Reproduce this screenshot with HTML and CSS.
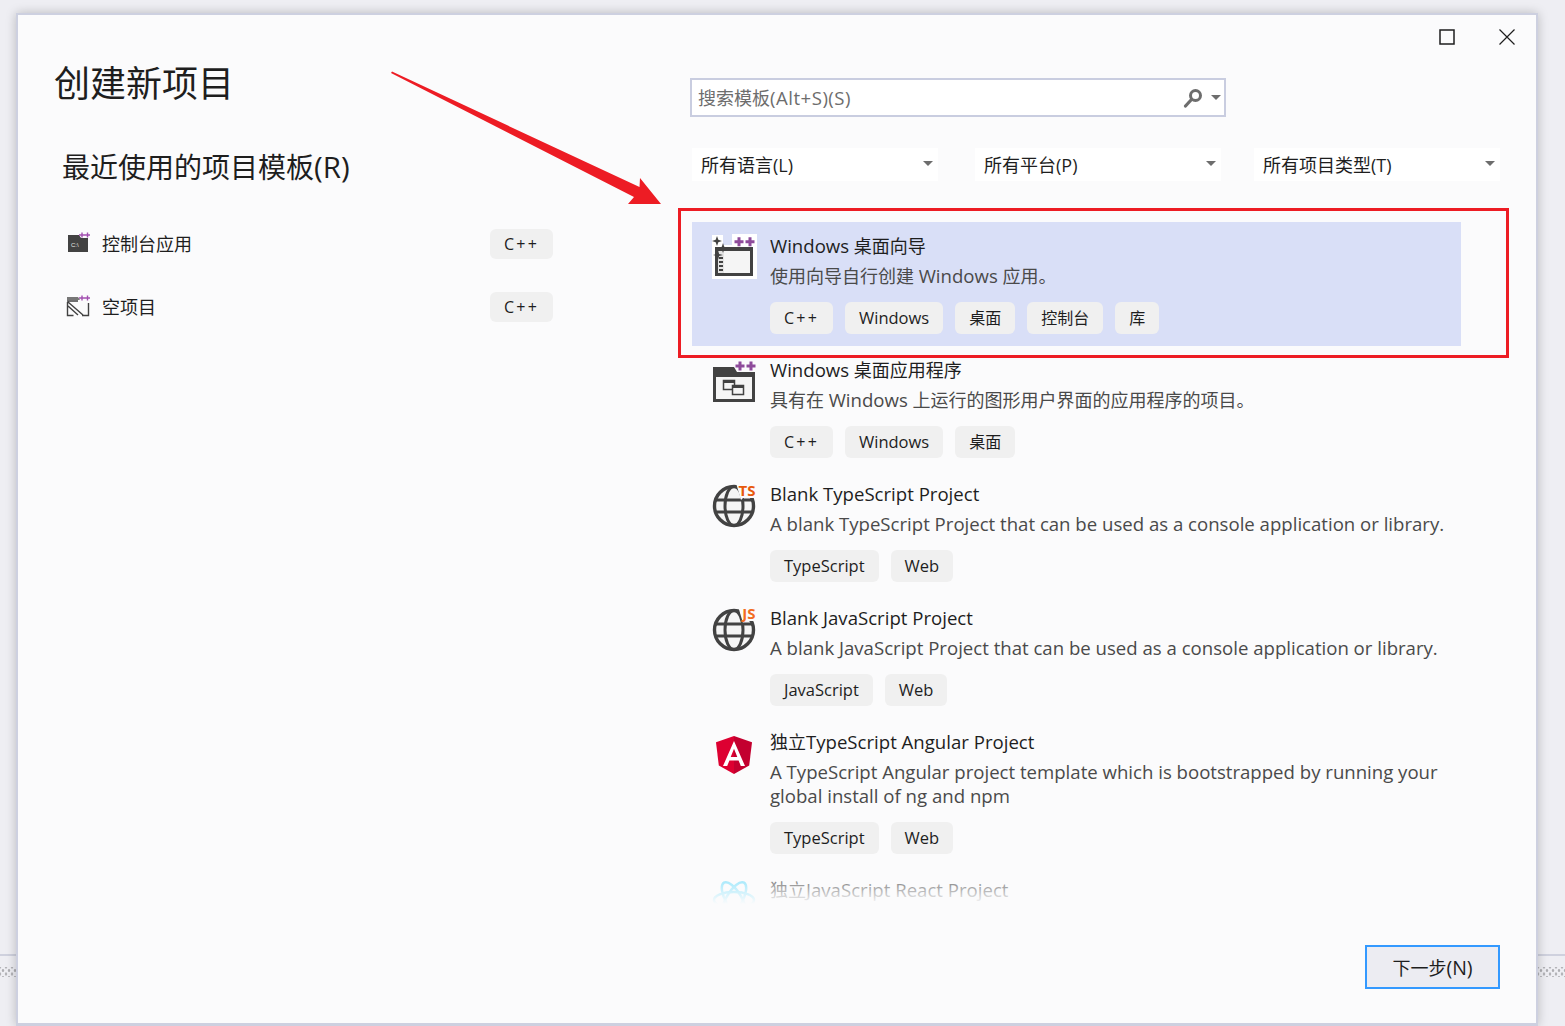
FILE: index.html
```html
<!DOCTYPE html>
<html lang="zh-CN">
<head>
<meta charset="utf-8">
<title>创建新项目</title>
<link rel="stylesheet" href="styles.css">
</head>
<body>
<div class="bg-line"></div>
<div class="bg-dots bg-dots-left"></div>
<div class="bg-dots bg-dots-right"></div>
<div class="dialog">
  <div class="titlebar">
    <span class="win-btn"><svg width="16" height="16" viewBox="0 0 16 16"><rect x="1" y="1" width="14" height="14" fill="none" stroke="#1e1e1e" stroke-width="1.5"/></svg></span>
    <span class="win-btn"><svg width="16" height="16" viewBox="0 0 16 16"><path d="M0.5 0.5L15.5 15.5M15.5 0.5L0.5 15.5" stroke="#1e1e1e" stroke-width="1.2"/></svg></span>
  </div>
  <div class="body">
    <div class="left">
      <h1 class="page-title">创建新项目</h1>
      <h2 class="section-title">最近使用的项目模板<span class="section-key">(R)</span></h2>
      <div class="recent-row">
        <svg class="recent-icon" width="24" height="22" viewBox="0 0 24 22"><path d="M2 3h11l2 3h7v14H2z" fill="#424242"/><text x="5" y="15" font-size="6" font-family="Liberation Sans" fill="#e8e8e8">C:\</text><path d="M13 3h6M16 .5v5M19 3h5M21.500 .5v5" stroke="#a24fb0" stroke-width="1.400" fill="none"/></svg>
        <span class="recent-name">控制台应用</span>
        <span class="tag tag-plus">C++</span>
      </div>
      <div class="recent-row">
        <svg class="recent-icon" width="24" height="22" viewBox="0 0 24 22"><path d="M1 6h11M1.500 7v13.500h6M16 20.500h6.500V8M2 7l15 13M2 11l10 9" stroke="#424242" stroke-width="1.400" fill="none"/><path d="M1 2h11l2 3H1z" fill="#777"/><path d="M13 3h6M16 .5v5M19 3h5M21.500 .5v5" stroke="#a24fb0" stroke-width="1.400" fill="none"/></svg>
        <span class="recent-name">空项目</span>
        <span class="tag tag-plus">C++</span>
      </div>
    </div>
    <div class="right">
      <div class="search">
        <span class="search-text">搜索模板<span class="search-key">(Alt+S)(S)</span></span>
        <svg width="20" height="20" viewBox="0 0 20 20"><circle cx="12.500" cy="7.500" r="5" fill="none" stroke="#6d6d6d" stroke-width="3"/><path d="M8.500 11.500L2.500 18" stroke="#6d6d6d" stroke-width="3.200" stroke-linecap="round"/></svg>
        <span class="caret search-caret"></span>
      </div>
      <div class="filters">
        <div class="filter"><span>所有语言(L)</span><span class="caret"></span></div>
        <div class="filter filter-platform"><span>所有平台(P)</span><span class="caret"></span></div>
        <div class="filter"><span>所有项目类型(T)</span><span class="caret"></span></div>
      </div>
      <div class="list">
        <div class="item item-selected">
          <svg class="item-icon" width="46" height="46" viewBox="0 0 46 46">
            <path d="M0 13h45v34H0zM0 3h11v12H0zM20 2h25v14H20z" fill="#fff"/>
            <rect x="4.500" y="16.500" width="35" height="26" fill="#f5f5f5" stroke="#424242" stroke-width="3"/>
            <path d="M3 15h38v4H3z" fill="#424242"/>
            <path d="M6 19h6v22H6z" fill="#e4e4e4"/>
            <path d="M7 25h4v2H7zM7 29h4v2H7zM7 33h4v2H7zM7 37h4v2H7z" fill="#424242"/>
            <path d="M5 4l1.300 3.700L10 9 6.300 10.300 5 14 3.700 10.300 0 9l3.700-1.300zM11 11l1.200 3.800L16 16l-3.800 1.200L11 21l-1.200-3.800L6 16l3.800-1.200zM6 18l1.100 3.900L11 23l-3.900 1.100L6 28l-1.100-3.900L1 23l3.900-1.100z" fill="#424242"/>
            <path d="M22.500 9.700h9M27 5.200v9M33.500 9.700h9M38 5.200v9" stroke="#8e4b9b" stroke-width="3" fill="none"/>
          </svg>
          <div class="item-main">
            <div class="item-title"><span class="en">Windows</span> 桌面向导</div>
            <div class="item-desc">使用向导自行创建 <span class="en">Windows</span> 应用。</div>
            <div class="tags"><span class="tag tag-plus">C++</span><span class="tag tag-en">Windows</span><span class="tag">桌面</span><span class="tag">控制台</span><span class="tag">库</span></div>
          </div>
        </div>
        <div class="item">
          <svg class="item-icon" width="46" height="46" viewBox="0 0 46 46">
            <path d="M2.500 17.500h39v27h-39z" fill="#f5f5f5" stroke="#424242" stroke-width="3"/>
            <path d="M1 11h21l3 5h18v5H1z" fill="#424242"/>
            <path d="M23.500 10h9M28 5.500v9M34.500 10h9M39 5.500v9" stroke="#8e4b9b" stroke-width="3" fill="none"/>
            <rect x="11.500" y="24.500" width="11" height="9" fill="#f5f5f5" stroke="#424242" stroke-width="1.500"/>
            <path d="M11 26h12" stroke="#424242" stroke-width="2"/>
            <rect x="20.500" y="29.500" width="11" height="9" fill="#f5f5f5" stroke="#424242" stroke-width="1.500"/>
            <path d="M20 31h12" stroke="#424242" stroke-width="2"/>
          </svg>
          <div class="item-main">
            <div class="item-title"><span class="en">Windows</span> 桌面应用程序</div>
            <div class="item-desc">具有在 <span class="en">Windows</span> 上运行的图形用户界面的应用程序的项目。</div>
            <div class="tags"><span class="tag tag-plus">C++</span><span class="tag tag-en">Windows</span><span class="tag">桌面</span></div>
          </div>
        </div>
        <div class="item">
          <svg class="item-icon" width="46" height="46" viewBox="0 0 46 46">
            <circle cx="22" cy="26" r="19.500" fill="#f5f5f5" stroke="#424242" stroke-width="3.400"/>
            <ellipse cx="22" cy="26" rx="9" ry="19.500" fill="none" stroke="#424242" stroke-width="3"/>
            <path d="M4 20h36M4 32h36" stroke="#424242" stroke-width="3"/>
            <path d="M24 3h22v15H31l-2 2z" fill="#fbfbfc"/>
            <text class="badge" x="43.500" y="16" text-anchor="end" fill="#e8590c">TS</text>
          </svg>
          <div class="item-main">
            <div class="item-title en">Blank TypeScript Project</div>
            <div class="item-desc en">A blank TypeScript Project that can be used as a console application or library.</div>
            <div class="tags"><span class="tag tag-en">TypeScript</span><span class="tag tag-en">Web</span></div>
          </div>
        </div>
        <div class="item">
          <svg class="item-icon" width="46" height="46" viewBox="0 0 46 46">
            <circle cx="22" cy="26" r="19.500" fill="#f5f5f5" stroke="#424242" stroke-width="3.400"/>
            <ellipse cx="22" cy="26" rx="9" ry="19.500" fill="none" stroke="#424242" stroke-width="3"/>
            <path d="M4 20h36M4 32h36" stroke="#424242" stroke-width="3"/>
            <path d="M26 2h20v15H33l-2 2z" fill="#fbfbfc"/>
            <text class="badge" x="43.500" y="15" text-anchor="end" fill="#f26b21">JS</text>
          </svg>
          <div class="item-main">
            <div class="item-title en">Blank JavaScript Project</div>
            <div class="item-desc en">A blank JavaScript Project that can be used as a console application or library.</div>
            <div class="tags"><span class="tag tag-en">JavaScript</span><span class="tag tag-en">Web</span></div>
          </div>
        </div>
        <div class="item">
          <svg class="item-icon" width="46" height="46" viewBox="0 0 46 46"><path d="M22 8L4 14.200l2.800 23.300L22 46z" fill="#dd0031"/><path d="M22 8l18 6.200-2.800 23.300L22 46z" fill="#c3002f"/><path d="M22 13L11 38h4.200l2.200-5.600h9.200l2.200 5.600H33zM25.300 29h-6.600L22 20.800z" fill="#fff" fill-rule="evenodd"/></svg>
          <div class="item-main">
            <div class="item-title">独立<span class="en">TypeScript Angular Project</span></div>
            <div class="item-desc en">A TypeScript Angular project template which is bootstrapped by running your global install of ng and npm</div>
            <div class="tags"><span class="tag tag-en">TypeScript</span><span class="tag tag-en">Web</span></div>
          </div>
        </div>
        <div class="item">
          <svg class="item-icon" width="46" height="46" viewBox="0 0 46 46"><g fill="none" stroke="#61dafb" stroke-width="2.500"><ellipse cx="22" cy="24" rx="20" ry="8"/><ellipse cx="22" cy="24" rx="20" ry="8" transform="rotate(60 22 24)"/><ellipse cx="22" cy="24" rx="20" ry="8" transform="rotate(120 22 24)"/></g></svg>
          <div class="item-main">
            <div class="item-title">独立<span class="en">JavaScript React Project</span></div>
          </div>
        </div>
      </div>
      <div class="footer"><button class="next-btn" type="button">下一步<span class="next-key">(N)</span></button></div>
    </div>
  </div>
</div>
<div class="callout"></div>
<svg class="arrow" width="280" height="140" viewBox="0 0 280 140"><path d="M1 0.500L248.500 116 249 107 270 133 237 133 243 126 0 2z" fill="#ed1c24"/></svg>
</body>
</html>
```
FILE: styles.css
```css
* { box-sizing: border-box; }
html, body { margin: 0; height: 100%; }
body {
  width: 1565px;
  height: 1026px;
  overflow: hidden;
  position: relative;
  background: #eeeef3;
  padding: 13px 0 0 16px;
  font-family: "Open Sans", "Noto Sans CJK SC", sans-serif;
  color: #1e1e1e;
}
.bg-line {
  position: absolute;
  left: 0; right: 0; top: 954px;
  height: 2px;
  background: #cfd1de;
}
.bg-dots {
  position: absolute;
  top: 967px;
  height: 10px;
  background-image:
    radial-gradient(circle, #aeaeb2 1px, transparent 1.6px),
    radial-gradient(circle, #aeaeb2 1px, transparent 1.6px);
  background-size: 6px 7px, 6px 7px;
  background-position: 0 0, 3px 3.500px;
}
.bg-dots-left { left: 0; width: 16px; }
.bg-dots-right { left: 1538px; width: 27px; }

.dialog {
  position: relative;
  width: 1522px;
  height: 1013px;
  border: 2px solid #cdd0e0;
  border-bottom-width: 3px;
  background: #fbfbfc;
  box-shadow: 0 0 10px rgba(0, 0, 0, .22);
  display: flex;
  flex-direction: column;
}
.titlebar {
  height: 48px;
  flex: none;
  display: flex;
  justify-content: flex-end;
  align-items: flex-start;
  gap: 44px;
  padding: 14px 21px 0 0;
}
.win-btn { display: block; width: 16px; height: 16px; }
.win-btn svg { display: block; }

.body { flex: 1; display: flex; min-height: 0; }
.left { width: 672px; flex: none; padding-left: 36px; }
.page-title {
  margin: -3px 0 0;
  font-size: 36px;
  font-weight: 400;
  line-height: 48px;
}
.section-title {
  margin: 39px 0 41px 8px;
  font-size: 28px;
  font-weight: 400;
  line-height: 40px;
}
.section-key { font-size: 29.5px; }
.recent-row {
  display: flex;
  align-items: center;
  height: 30px;
  margin: 0 0 33px 12px;
  width: 487px;
}
.recent-row .tag { margin-top: 2px; }
.recent-icon { flex: none; margin-right: 12px; }
.recent-name { font-size: 18px; flex: 1; }

.right { flex: 1; min-width: 0; display: flex; flex-direction: column; }
.search {
  width: 536px;
  height: 39px;
  border: 2px solid #c9cde0;
  background: #fff;
  display: flex;
  align-items: center;
  padding: 0 3px 0 6px;
  margin-top: 15px;
}
.search-text { flex: 1; font-size: 18px; color: #6d6d6d; padding-bottom: 2px; }
.search-key { font-size: 18.6px; letter-spacing: .5px; }
.caret {
  width: 0; height: 0;
  border-left: 5px solid transparent;
  border-right: 5px solid transparent;
  border-top: 5px solid #6d6d6d;
}
.search-caret { margin-left: 8px; }
.filters { display: flex; gap: 33px; margin: 31px 0 41px 2px; }
.filter {
  width: 246px;
  height: 33px;
  background: #fff;
  display: flex;
  align-items: center;
  justify-content: space-between;
  padding: 0 5px 2px 9px;
  font-size: 18px;
}
.filter-platform { margin-left: 4px; }
.list { position: relative; height: 682px; overflow: hidden; margin-left: 2px; width: 769px; flex: none; }
.list::after {
  content: "";
  position: absolute;
  left: 0; right: 0; bottom: 0;
  height: 26px;
  background: linear-gradient(rgba(251, 251, 252, .4), #fbfbfc);
}
.item { display: flex; gap: 12px; padding: 10px 0 12px 20px; }
.item-selected { background: #d9dff7; }
.item-icon { flex: none; overflow: visible; }
.item-main { flex: 1; min-width: 0; }
.item-title { font-size: 18px; line-height: 28px; }
.item-desc { font-size: 18px; line-height: 24px; color: #4a4a4a; margin-top: 4px; padding-right: 10px; }
.en { font-size: 18.6px; }
.tags { display: flex; gap: 12px; margin-top: 14px; }
.tag {
  display: inline-flex;
  align-items: center;
  height: 32px;
  padding: 0 14px 2px;
  border-radius: 6px;
  background: #f0f0f0;
  font-size: 16px;
}
.recent-row .tag { height: 30px; }
.tag-en { font-size: 16.5px; }
.tag-plus { letter-spacing: 2.2px; padding: 0 14px; }
.badge { font: 700 15px "Open Sans", sans-serif; }
.footer { display: flex; justify-content: flex-end; padding: 41px 36px 0 0; }
.next-btn {
  width: 135px;
  height: 44px;
  border: 2px solid #3399ff;
  background: #ececf2;
  font: inherit;
  font-size: 18px;
  color: #1e1e1e;
  padding: 0;
}
.next-key { font-size: 19.5px; }

.callout {
  position: absolute;
  left: 678px; top: 208px;
  width: 831px; height: 150px;
  border: 3px solid #ed1c24;
}
.arrow { position: absolute; left: 391px; top: 71px; overflow: visible; }
```
